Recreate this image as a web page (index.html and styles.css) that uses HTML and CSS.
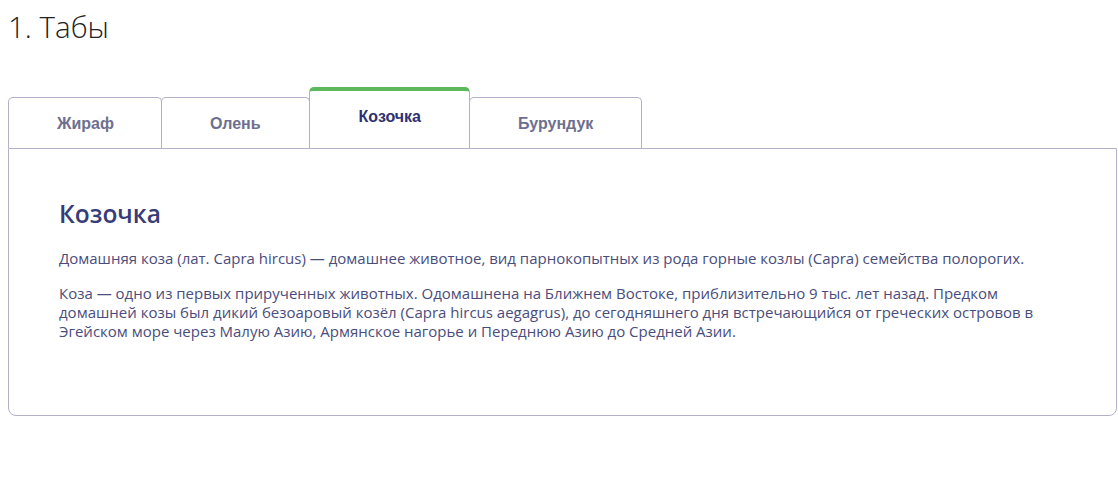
FILE: index.html
```html
<html>
<head>
	<meta charset="utf-8">
	<link rel="stylesheet" href="styles.css">
</head>

<body>
	<h1 class="title">1. Табы</h1>
	<div class="tabs">
		<div class="tab-list">
			<div class="tab">Жираф</div>
			<div class="tab">Олень</div>
			<div class="tab tab-active">Козочка</div>
			<div class="tab">Бурундук</div>
		</div>
		<div class="tab-panel">
			<h2 class="panel-title">Козочка</h2>
			<p class="panel-text">Домашняя коза (лат. Capra hircus) — домашнее животное, вид парнокопытных из рода горные козлы (Capra) семейства полорогих.</p>
			<p class="panel-text">Коза — одно из первых прирученных животных. Одомашнена на Ближнем Востоке, приблизительно 9 тыс. лет назад. Предком домашней козы был дикий безоаровый козёл (Capra hircus aegagrus), до сегодняшнего дня встречающийся от греческих островов в Эгейском море через Малую Азию, Армянское нагорье и Переднюю Азию до Средней Азии.</p>
		</div>
	</div>
</body>

</html>
```

FILE: styles.css
```css
body{
	margin: 8px 1px 8px 8px;
	background-color: white;
	font-family: "Open Sans", sans-serif;
}

.title{
	margin: 0;
	font-size: 29.5px;
	font-weight: 300;
	line-height: 38px;
	color: #222;
}

.tabs{
	margin-top: 41px;
}

.tab-list{
	display: flex;
	align-items: flex-end;
}

.tab{
	height: 50px;
	line-height: 52px;
	padding: 0 48px;
	border: 1px solid #b3b1c9;
	border-bottom: none;
	border-radius: 5px 5px 0 0;
	margin-right: -1px;
	font-family: "Liberation Sans", Arial, sans-serif;
	font-size: 16px;
	font-weight: bold;
	color: #6e6f90;
	background-color: white;
}

.tab:first-child{
	padding-right: 47px;
}

.tab-active{
	height: 57px;
	line-height: 52px;
	padding: 0 48px 0 49px;
	border-top: 4px solid #5cb85c;
	color: #2e3170;
}

.tab-panel{
	border: 1px solid #b3b1c9;
	border-radius: 0 0 8px 8px;
	padding: 49px 50px 74px;
}

.panel-title{
	margin: 0 0 19px;
	font-size: 24.5px;
	font-weight: 600;
	line-height: 32px;
	color: #373b78;
}

.panel-text{
	margin: 0 0 16px;
	font-size: 15px;
	line-height: 19px;
	color: #4a4d7c;
}

.panel-text:last-child{
	margin-bottom: 0;
}
```
